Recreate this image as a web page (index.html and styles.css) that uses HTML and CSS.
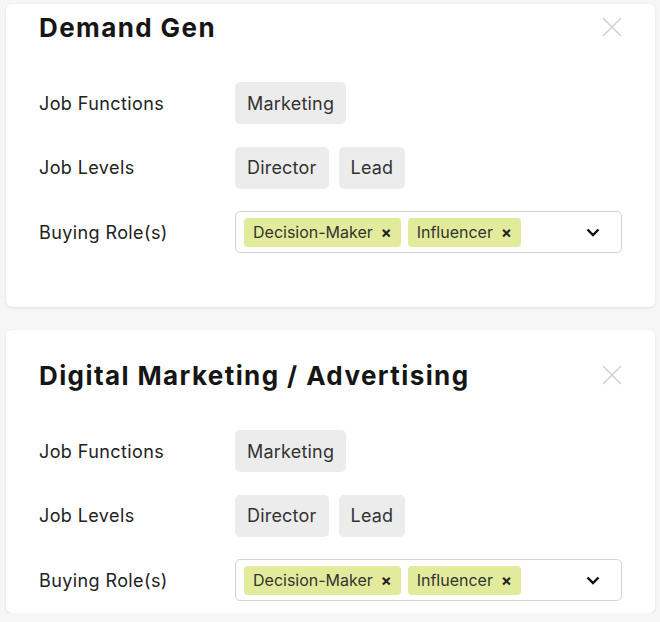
FILE: index.html
```html
<!DOCTYPE html>
<html lang="en">
<head>
  <meta charset="UTF-8" />
  <title>Personas</title>
  <link rel="stylesheet" href="styles.css">
</head>
<body>

  <div class="card first">
    <div class="card-head">
      <h2>Demand Gen</h2>
      <button class="close" aria-label="Close">
        <svg width="20" height="20" viewBox="0 0 20 20"><path d="M1 1L19 19M19 1L1 19" /></svg>
      </button>
    </div>
    <div class="rows">
      <div class="label">Job Functions</div>
      <div class="chips"><span class="chip">Marketing</span></div>
      <div class="label">Job Levels</div>
      <div class="chips"><span class="chip">Director</span><span class="chip">Lead</span></div>
      <div class="label">Buying Role(s)</div>
      <div class="select">
        <span class="tag">Decision-Maker <b>×</b></span>
        <span class="tag">Influencer <b>×</b></span>
        <svg class="caret" width="14" height="9" viewBox="0 0 14 9"><path d="M1.5 1.5L7 7L12.5 1.5" /></svg>
      </div>
    </div>
  </div>

  <div class="card last">
    <div class="card-head">
      <h2>Digital Marketing / Advertising</h2>
      <button class="close" aria-label="Close">
        <svg width="20" height="20" viewBox="0 0 20 20"><path d="M1 1L19 19M19 1L1 19" /></svg>
      </button>
    </div>
    <div class="rows">
      <div class="label">Job Functions</div>
      <div class="chips"><span class="chip">Marketing</span></div>
      <div class="label">Job Levels</div>
      <div class="chips"><span class="chip">Director</span><span class="chip">Lead</span></div>
      <div class="label">Buying Role(s)</div>
      <div class="select">
        <span class="tag">Decision-Maker <b>×</b></span>
        <span class="tag">Influencer <b>×</b></span>
        <svg class="caret" width="14" height="9" viewBox="0 0 14 9"><path d="M1.5 1.5L7 7L12.5 1.5" /></svg>
      </div>
    </div>
  </div>

</body>
</html>
```

FILE: styles.css
```css
body{margin:0;padding:4px 5px 0 6px;background:#f6f6f6;font-family:Inter, "Liberation Sans", sans-serif;color:#222;overflow:hidden;}
.card{background:#fff;border-radius:6px;box-shadow:0 1px 3px rgba(0,0,0,.09);padding:29px 33px 54px 33px;margin-bottom:23px;}
.card.first{padding-top:7px;}
.card.last{padding-bottom:12px;margin-bottom:0;}
.card-head{display:flex;justify-content:space-between;align-items:center;height:32px;margin-bottom:39px;}
.card-head h2{margin:0;font-size:26px;font-weight:700;color:#161616;letter-spacing:1.4px;}
.close{border:none;background:none;padding:0;width:20px;height:20px;cursor:pointer;}
.close svg{display:block;}
.close path{stroke:#d2d2d2;stroke-width:1.6;fill:none;}
.rows{display:grid;grid-template-columns:196px 1fr;row-gap:22.5px;align-items:center;}
.label{font-size:18px;letter-spacing:.4px;color:#222;}
.chips{display:flex;gap:10px;}
.chip{display:inline-flex;align-items:center;height:42px;padding:0 12px;background:#ececec;border-radius:5px;font-size:18px;letter-spacing:.2px;color:#333;}
.select{display:flex;align-items:center;gap:7px;height:40px;border:1px solid #d4d4d4;border-radius:5px;padding:0 21px 0 8px;}
.tag{display:inline-flex;align-items:center;height:29px;padding:0 9px;background:#e1eb9b;border-radius:4px;font-size:16px;color:#333;}
.tag b{margin-left:8px;font-size:16px;font-weight:700;color:#222;}
.caret{margin-left:auto;}
.caret path{stroke:#111;stroke-width:2.4;fill:none;}
```
